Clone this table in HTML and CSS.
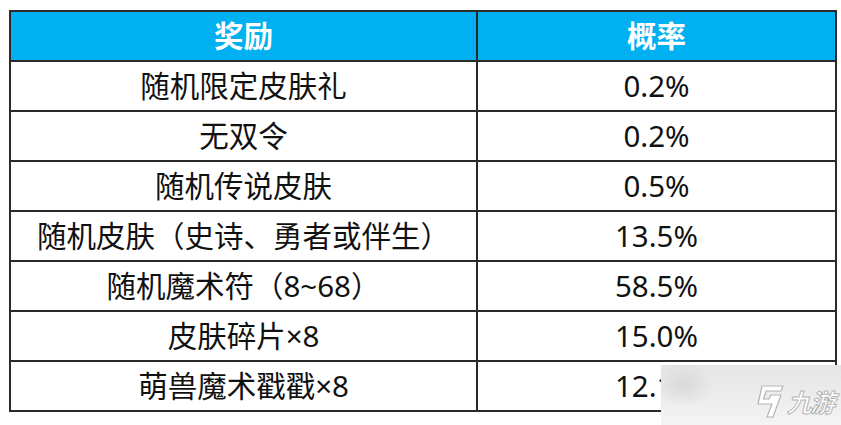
FILE: index.html
```html
<!DOCTYPE html>
<html lang="zh">
<head>
<meta charset="utf-8">
<link rel="stylesheet" href="styles.css">
</head>
<body>
<div class="page">
  <table class="prob">
    <thead>
      <tr><th class="c1">奖励</th><th class="c2">概率</th></tr>
    </thead>
    <tbody>
      <tr><td>随机限定皮肤礼</td><td>0.2%</td></tr>
      <tr><td>无双令</td><td>0.2%</td></tr>
      <tr><td>随机传说皮肤</td><td>0.5%</td></tr>
      <tr><td>随机皮肤（史诗、勇者或伴生）</td><td>13.5%</td></tr>
      <tr><td>随机魔术符（8~68）</td><td>58.5%</td></tr>
      <tr><td>皮肤碎片×8</td><td>15.0%</td></tr>
      <tr><td>萌兽魔术戳戳×8</td><td>12.1%</td></tr>
    </tbody>
  </table>
  <div class="wm">
    <svg class="wm-icon" width="30" height="34" viewBox="0 0 30 34">
      <path d="M8 1 L29 1 L27 6 L12 6 L9.5 14 L15 14 L17 10 L27 10 L19 32 L13 32 L18 19 L4 19 Z" fill="#fff" stroke="#b4b4b4" stroke-width="1.2" stroke-linejoin="round"/>
    </svg>
    <span class="wm-text">九游</span>
  </div>
</div>
</body>
</html>
```
FILE: styles.css
```css
html, body {
  margin: 0;
  padding: 0;
  background: #fff;
}
.page {
  position: relative;
  width: 841px;
  height: 425px;
  overflow: hidden;
  padding: 10px 0 0 9px;
  box-sizing: border-box;
}
.prob {
  border-collapse: collapse;
  font-family: "Noto Sans", "Noto Sans CJK SC", sans-serif;
  font-size: 29.5px;
  color: #111;
  table-layout: fixed;
}
.prob th, .prob td {
  border: 2px solid #2a2a2a;
  height: 48px;
  padding: 0;
  text-align: center;
  vertical-align: middle;
  line-height: 48px;
  white-space: nowrap;
}
.prob th {
  background: #00b0f0;
  color: #fff;
  font-weight: 700;
}
.prob .c1 { width: 465px; }
.prob .c2 { width: 357px; }
.wm {
  position: absolute;
  left: 661px;
  top: 365px;
  width: 180px;
  height: 60px;
  background:
    radial-gradient(ellipse 30px 22px at 22px 20px, rgba(215,215,215,0.9), rgba(215,215,215,0) 100%),
    linear-gradient(180deg, #e5e5e5 0%, #ececec 50%, #f4f4f4 100%);
  display: flex;
  align-items: center;
  justify-content: flex-end;
  gap: 6px;
  padding-right: 5px;
  box-sizing: border-box;
}
.wm-icon {
  display: block;
  margin-top: 13px;
}
.wm-text {
  font-family: "Noto Sans CJK SC", sans-serif;
  font-size: 25px;
  font-weight: 700;
  color: #fff;
  -webkit-text-stroke: 1px #b4b4b4;
  transform: skewX(-15deg);
  letter-spacing: -2px;
  margin-top: 11px;
}
```
